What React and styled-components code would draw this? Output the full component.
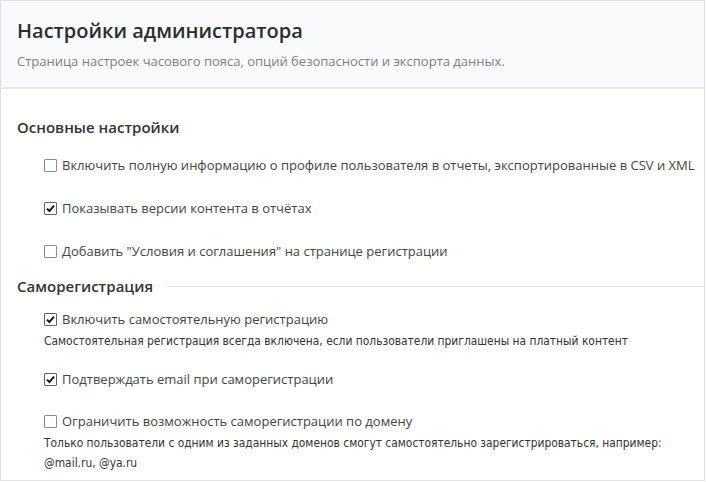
import React from 'react'
import styled, { createGlobalStyle } from 'styled-components'

const GlobalStyle = createGlobalStyle`
  html, body {
    margin: 0;
    padding: 0;
    background: #ffffff;
  }

  body {
    font-family: "Open Sans", "Liberation Sans", sans-serif;
    color: #444;
  }
`

const Panel = styled.div`
  width: 705px;
  height: 481px;
  box-sizing: border-box;
  border: 1px solid #dcdfe5;
  background: #fff;
  overflow: hidden;
`

const Header = styled.header`
  height: 88px;
  box-sizing: border-box;
  padding: 15px 16px 0;
  background: #f9fafc;
  border-bottom: 2px solid #e8eaef;
`

const Title = styled.h1`
  margin: 0;
  font-size: 20px;
  line-height: 30px;
  font-weight: 600;
  color: #2b2e31;
`

const Subtitle = styled.p`
  margin: 6px 0 0;
  font-size: 13px;
  line-height: 18px;
  color: #7b8087;
`

const Body = styled.div`
  padding: 28px 0 0 16px;
`

const SectionTitle = styled.h2`
  display: flex;
  align-items: center;
  gap: 14px;
  margin: ${p => (p.$first ? '0' : '16px')} 0 0;
  font-size: 15px;
  line-height: 20px;
  font-weight: 600;
  color: #333;

  &::after {
    content: '';
    flex: 1;
    height: 1px;
    background: ${p => (p.$ruled ? '#e6e7ea' : 'transparent')};
  }
`

const OptionList = styled.div`
  padding-left: 27px;
  margin-top: ${p => p.$top}px;
`

const Option = styled.div`
  margin-top: ${p => p.$gap}px;
`

const Label = styled.label`
  display: flex;
  align-items: center;
  gap: 5px;
  font-size: 13px;
  line-height: 18px;
  color: #444;
`

const Box = styled.span`
  display: inline-flex;
  align-items: center;
  justify-content: center;
  width: 13px;
  height: 13px;
  box-sizing: border-box;
  border: 1px solid ${p => (p.$checked ? '#5f6368' : '#8a8d92')};
  border-radius: 1px;
  background: #fff;
  flex-shrink: 0;
`

const Hint = styled.div`
  margin-top: 3px;
  font-family: "DejaVu Sans Condensed", "DejaVu Sans", Verdana, sans-serif;
  font-stretch: semi-condensed;
  font-size: 11.9px;
  line-height: 20px;
  color: #333;
`

const Check = ({ checked }) => (
  <Box $checked={checked}>
    {checked && (
      <svg width="9" height="9" viewBox="0 0 9 9">
        <path d="M1 4.6 L3.4 7 L8 1.6" fill="none" stroke="#111" strokeWidth="1.9" />
      </svg>
    )}
  </Box>
)

const CheckOption = ({ checked, label, hint, gap }) => (
  <Option $gap={gap}>
    <Label>
      <Check checked={checked} />
      <span>{label}</span>
    </Label>
    {hint && <Hint>{hint}</Hint>}
  </Option>
)

export default function App() {
  return (
    <>
      <GlobalStyle />
      <Panel>
        <Header>
          <Title>Настройки администратора</Title>
          <Subtitle>Страница настроек часового пояса, опций безопасности и экспорта данных.</Subtitle>
        </Header>
        <Body>
          <SectionTitle $first>Основные настройки</SectionTitle>
          <OptionList $top={19}>
            <CheckOption gap={0} label="Включить полную информацию о профиле пользователя в отчеты, экспортированные в CSV и XML" />
            <CheckOption gap={25} checked label="Показывать версии контента в отчётах" />
            <CheckOption gap={25} label='Добавить "Условия и соглашения" на странице регистрации' />
          </OptionList>
          <SectionTitle $ruled>Саморегистрация</SectionTitle>
          <OptionList $top={14}>
            <CheckOption
              gap={0}
              checked
              label="Включить самостоятельную регистрацию"
              hint="Самостоятельная регистрация всегда включена, если пользователи приглашены на платный контент"
            />
            <CheckOption gap={19} checked label="Подтверждать email при саморегистрации" />
            <CheckOption
              gap={24}
              label="Ограничить возможность саморегистрации по домену"
              hint={<>Только пользователи с одним из заданных доменов смогут самостоятельно зарегистрироваться, например:<br />@mail.ru, @ya.ru</>}
            />
          </OptionList>
        </Body>
      </Panel>
    </>
  )
}
